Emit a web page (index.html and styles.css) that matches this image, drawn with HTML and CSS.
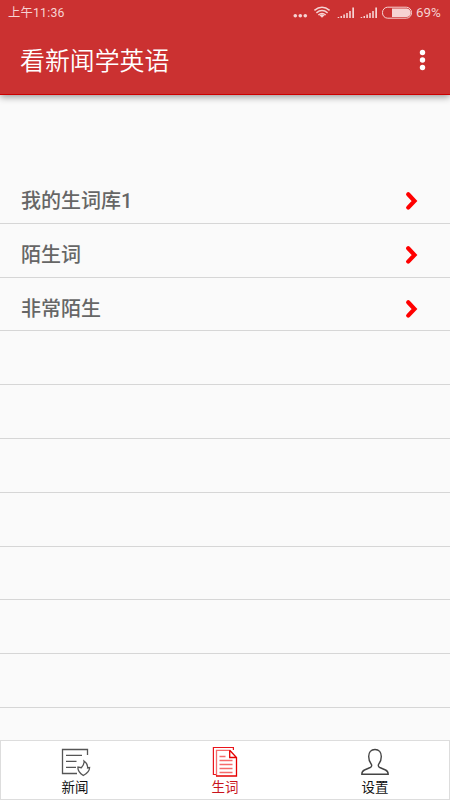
FILE: index.html
```html
<!DOCTYPE html>
<html lang="zh-CN">
<head>
<meta charset="utf-8">
<title>看新闻学英语</title>
<link rel="stylesheet" href="styles.css">
</head>
<body>
<div class="app">
  <header class="header">
    <div class="status">
      <span class="time">上午11:36</span>
      <svg class="status-icons" width="122" height="18" viewBox="0 0 122 18">
        <g fill="#f6d3d3">
          <circle cx="2.3" cy="12.8" r="1.8"/><circle cx="7.3" cy="12.8" r="1.8"/><circle cx="12.3" cy="12.8" r="1.8"/>
          <path d="M29 14.8l-2.6-2.6q2.6-1.8 5.2 0z"/>
          <path d="M44.7 14h1.5v1h-1.5zM47.5 13H49v2h-1.5zM50.3 11.5h1.6V15h-1.6zM53.2 10h1.6v5h-1.6zM56.2 8h1.6v7h-1.6zM59.3 4.5H61V15h-1.7z"/>
          <path d="M67.7 14h1.5v1h-1.5zM70.5 13H72v2h-1.5zM73.3 11.5h1.6V15h-1.6zM76.2 10h1.6v5h-1.6zM79.2 8h1.6v7h-1.6zM82.3 4.5H84V15h-1.7z"/>
          <path d="M99 5.5h14.5a4 4 0 0 1 0 8.5H99z"/>
        </g>
        <g fill="none" stroke="#f6d3d3" stroke-width="1.5">
          <path d="M21.4 7.4q7.6-6.2 15.2 0M23.4 9.8q5.6-4.5 11.2 0M25.3 12q3.7-3 7.4 0"/>
          <rect x="89.5" y="4.2" width="29" height="11" rx="5.2" stroke-width="1"/>
        </g>
      </svg>
      <span class="percent">69%</span>
    </div>
    <div class="toolbar">
      <h1 class="title">看新闻学英语</h1>
      <svg class="more" width="8" height="24" viewBox="0 0 8 24" fill="#fff"><circle cx="4.5" cy="4.5" r="2.7"/><circle cx="4.5" cy="12" r="2.7"/><circle cx="4.5" cy="19.5" r="2.7"/></svg>
    </div>
  </header>
  <main class="list">
    <div class="row"><span>我的生词库1</span><svg class="chevron" width="14" height="20" viewBox="0 0 14 20"><path d="M3.2 3.2L9.5 10 3.2 16.6"/></svg></div>
    <div class="row"><span>陌生词</span><svg class="chevron" width="14" height="20" viewBox="0 0 14 20"><path d="M3.2 3.2L9.5 10 3.2 16.6"/></svg></div>
    <div class="row"><span>非常陌生</span><svg class="chevron" width="14" height="20" viewBox="0 0 14 20"><path d="M3.2 3.2L9.5 10 3.2 16.6"/></svg></div>
    <div class="row"></div>
    <div class="row"></div>
    <div class="row"></div>
    <div class="row"></div>
    <div class="row"></div>
    <div class="row"></div>
    <div class="row"></div>
  </main>
  <nav class="tabs">
    <div class="tab">
      <svg width="32" height="32" viewBox="0 0 32 32" fill="none" stroke="#555" stroke-width="1.3">
        <path d="M18 27.5H3.5v-24h25V9"/>
        <path d="M7 9.3h16M7 15.3h10.5M7 21.3h10"/>
        <path d="M25 15c.5 2.7-.8 4.6-2.7 6.7l-3.3-.7c-.5 3 .8 5.5 5.3 8.5 3.5-1.8 6.2-4.6 6.3-8l-2 .5c.4-2.8-1-5.2-3.6-7z"/>
      </svg>
      <span>新闻</span>
    </div>
    <div class="tab active">
      <svg width="32" height="32" viewBox="0 0 32 32" fill="none">
        <path d="M7 28.5H4.4V1.5h20V4" stroke="#e9151c" stroke-width="1.2"/>
        <path d="M7.5 30V4.3H21" stroke="#f56b6b" stroke-width="1.3"/>
        <path d="M20.7 4.3l6.8 7.2V30H7M20.7 4.3v7.2h6.8" stroke="#e50000" stroke-width="1.3"/>
        <path d="M10.5 10.5h6M10.5 14.5h13M10.5 18.5h13M10.5 22.5h13M10.5 26.5h13" stroke="#f56b6b" stroke-width="1.3"/>
      </svg>
      <span>生词</span>
    </div>
    <div class="tab">
      <svg width="32" height="32" viewBox="0 0 32 32" fill="none" stroke="#444" stroke-width="1.4">
        <path d="M16 3.5c-4 0-6.3 3-6.3 7 0 3.3 1 5.5 2.3 7.2 1.1 1.5.9 3-.8 3.8L5.5 24c-2 .9-2.7 2-2.7 4.3h26.4c0-2.3-.7-3.4-2.7-4.3l-5.7-2.5c-1.7-.8-1.9-2.3-.8-3.8 1.3-1.7 2.3-3.9 2.3-7.2 0-4-2.3-7-6.3-7z"/>
      </svg>
      <span>设置</span>
    </div>
  </nav>
</div>
</body>
</html>
```
FILE: styles.css
```css
* { box-sizing: border-box; }
body { margin: 0; font-family: Roboto, "Noto Sans CJK SC", sans-serif; }
.app {
  width: 450px;
  height: 800px;
  display: flex;
  flex-direction: column;
  background: #fafafa;
  overflow: hidden;
}
.header {
  flex: none;
  height: 95px;
  background: #cb3131;
  border-bottom: 1px solid #cc0000;
  box-shadow: 0 2px 7px rgba(0, 0, 0, .4);
}
.status {
  height: 26px;
  display: flex;
  align-items: center;
  padding: 0 7px 0 8px;
  color: #f6d3d3;
  font-size: 12.3px;
  line-height: 26px;
}
.time { letter-spacing: .2px; }
.status-icons { margin-left: auto; margin-bottom: 2px; }
.percent { width: 27px; margin-left: 1px; white-space: nowrap; font-size: 13.3px; }
.toolbar {
  height: 68px;
  display: flex;
  align-items: center;
  justify-content: space-between;
  padding: 0 24px 0 20px;
}
.title {
  margin: 3px 0 0;
  color: #fff;
  font-size: 24.9px;
  font-weight: 350;
  line-height: 36px;
}
.list { flex: 1; min-height: 0; padding-top: 75px; overflow: hidden; }
.row {
  height: 53.8px;
  display: flex;
  align-items: center;
  justify-content: space-between;
  padding: 9.4px 31px 0 21px;
  border-bottom: 1px solid #d6d6d6;
  color: #666;
  font-size: 20px;
  font-weight: 500;
  line-height: 30px;
}
.chevron { fill: none; stroke: #f00; stroke-width: 4.2; stroke-linecap: round; stroke-linejoin: miter; }
.tabs {
  flex: none;
  height: 60px;
  display: flex;
  justify-content: center;
  background: #fff;
  border: 1px solid #ddd;
}
.tab {
  flex: none;
  width: 150px;
  display: flex;
  flex-direction: column;
  align-items: center;
  padding-top: 5px;
  color: #111;
  font-size: 13.5px;
  line-height: 18px;
}
.active { color: #c8141c; }
```
